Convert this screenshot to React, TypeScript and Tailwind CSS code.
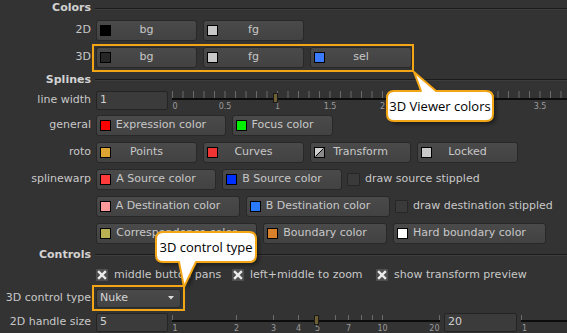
import React from "react";

type Kids = { children?: React.ReactNode };

const Label = ({ children }: Kids) => (
  <div className="w-[91px] shrink-0 text-right whitespace-nowrap">{children}</div>
);

const Header = ({ title, h }: { title: string; h: string }) => (
  <div className={`flex items-center ${h}`}>
    <div className="w-[91px] shrink-0 text-right font-bold text-[#d2d2d2]">{title}</div>
    <div className="ml-[4px] flex-1 h-[2px] border-t border-t-[#1c1c1c] border-b border-b-[#3d3d3d]" />
  </div>
);

const Row = ({ h, label, children }: { h: string; label: string } & Kids) => (
  <div className={`flex items-center ${h}`}>
    <Label>{label}</Label>
    <div className="ml-[5px] flex items-center gap-[6px]">{children}</div>
  </div>
);

const ColorBtn = ({ w, sw, text, swatch }: { w: string; sw?: string; text: string; swatch?: React.ReactNode }) => (
  <div
    className={`${w} h-[21px] shrink-0 flex items-center rounded-[3px] border border-[#282828] bg-gradient-to-b from-[#4a4a4a] to-[#424242] px-[3px]`}
  >
    {swatch ?? <span className={`w-[11px] h-[11px] border border-black shrink-0 ${sw}`} />}
    <span className="flex-1 text-center whitespace-nowrap">{text}</span>
    <span className="w-[11px] shrink-0" />
  </div>
);

const TransformSwatch = () => (
  <svg width="11" height="11" className="shrink-0">
    <rect x="0.5" y="0.5" width="10" height="10" fill="#d0d0d0" stroke="#000" />
    <path d="M10 1 L10 10 L1 10 Z" fill="#8a8a8a" />
    <path d="M1.5 9.5 L9.5 1.5" stroke="#000" strokeWidth="1" />
  </svg>
);

const Unchecked = () => (
  <span className="w-[13px] h-[13px] shrink-0 border border-[#262626] bg-[#3a3a3a] rounded-[1px]" />
);

const Checked = () => (
  <svg width="12" height="12" className="shrink-0">
    <rect x="0" y="0" width="12" height="12" rx="1" fill="#4f4f4f" />
    <path d="M3 3 L9 9 M9 3 L3 9" stroke="#ececec" strokeWidth="2.4" strokeLinecap="square" />
  </svg>
);

const Input = ({ w, value }: { w: string; value: string }) => (
  <div className={`${w} h-[19px] shrink-0 flex items-center rounded-[2px] border border-[#242424] bg-[#3b3b3b] pl-[3px] text-[#d0d0d0]`}>
    {value}
  </div>
);

const lineTicks = Array.from({ length: 38 }, (_, i) => i * 10.5);
// 2.5 and 3 sit under the tooltip
const lineLabels: [number, string][] = [[0, "0"], [1, "0.5"], [2, "1"], [3, "1.5"], [4, "2"], [7, "3.5"]];

const LineWidthSlider = () => (
  <svg width="395" height="23" className="ml-[4px] shrink-0" style={{ fontFamily: "'DejaVu Sans', sans-serif" }}>
    {lineTicks.map((x) => (
      <line key={x} x1={x + 0.5} y1="2" x2={x + 0.5} y2="9" stroke="#6a6a6a" />
    ))}
    <rect x="0" y="9" width="395" height="2" fill="#0c0c0c" />
    {lineLabels.map(([i, t]) => (
      <text key={t} x={i * 52.5 + 0.5} y="20" fontSize="8" fill="#9c9c9c" textAnchor={i === 0 ? "start" : "middle"}>
        {t}
      </text>
    ))}
    <rect x="101.5" y="4.5" width="4" height="9" fill="#6f6033" stroke="#1a1a1a" />
  </svg>
);

const handleTicks: [number, string][] = [
  [0, "1"], [64, "2"], [101, "3"], [126, "4"], [145, "5"], [163, ""], [176, "7"], [189, ""], [200, ""], [210, "10"], [267, "20"],
];

const HandleSlider = () => (
  <svg width="268" height="27" className="ml-[4px] shrink-0" style={{ fontFamily: "'DejaVu Sans', sans-serif" }}>
    {handleTicks.map(([x]) => (
      <line key={x} x1={x + 0.5} y1="6" x2={x + 0.5} y2="11" stroke="#6a6a6a" />
    ))}
    <rect x="0" y="11" width="268" height="2" fill="#0c0c0c" />
    {handleTicks
      .filter(([, t]) => t)
      .map(([x, t], i, arr) => (
        <text
          key={t}
          x={x + 0.5}
          y="22"
          fontSize="8"
          fill="#9c9c9c"
          textAnchor={i === 0 ? "start" : i === arr.length - 1 ? "end" : "middle"}
        >
          {t}
        </text>
      ))}
    <rect x="142.5" y="6.5" width="4" height="9" fill="#6f6033" stroke="#1a1a1a" />
  </svg>
);

const TailSlider = () => (
  <svg width="50" height="27" className="ml-[4px] shrink-0" style={{ fontFamily: "'DejaVu Sans', sans-serif" }}>
    <line x1="0.5" y1="6" x2="0.5" y2="11" stroke="#6a6a6a" />
    <rect x="0" y="11" width="50" height="2" fill="#0c0c0c" />
    <text x="1" y="22" fontSize="8" fill="#9c9c9c">1</text>
  </svg>
);

const Bubble = ({
  left, top, w, h, path, text, tx, ty,
}: { left: string; top: string; w: number; h: number; path: string; text: string; tx: number; ty: number }) => (
  <svg width={w} height={h} className={`absolute ${left} ${top}`} style={{ fontFamily: "'Open Sans', sans-serif" }}>
    <defs>
      <filter id={`blur${tx}`} x="-20%" y="-20%" width="140%" height="140%">
        <feGaussianBlur stdDeviation="2" />
      </filter>
    </defs>
    <path d={path} transform="translate(3 3)" fill="rgba(0,0,0,0.45)" filter={`url(#blur${tx})`} />
    <path d={path} fill="#ffffff" stroke="#f2a515" strokeWidth="2" strokeLinejoin="round" />
    <text x={tx} y={ty} fontSize="13" fill="#000" textAnchor="middle">
      {text}
    </text>
  </svg>
);

export default function App() {
  return (
    <div className="relative w-[567px] h-[333px] overflow-hidden bg-[#333333] text-[11px] text-[#c8c8c8] font-['DejaVu_Sans',sans-serif]">
      <Header title="Colors" h="h-[17px]" />
      <Row h="h-[27px]" label="2D">
        <ColorBtn w="w-[101px]" sw="bg-black" text="bg" />
        <ColorBtn w="w-[101px]" sw="bg-[#c8c8c8]" text="fg" />
      </Row>
      <Row h="h-[27px]" label="3D">
        <ColorBtn w="w-[101px]" sw="bg-[#262626]" text="bg" />
        <ColorBtn w="w-[101px]" sw="bg-[#c8c8c8]" text="fg" />
        <ColorBtn w="w-[102px]" sw="bg-[#3b7bff]" text="sel" />
      </Row>

      <Header title="Splines" h="h-[18px]" />
      <div className="flex items-center h-[23px]">
        <Label>line width</Label>
        <div className="ml-[5px] flex items-center">
          <Input w="w-[72px]" value="1" />
          <LineWidthSlider />
        </div>
      </div>
      <Row h="h-[27px]" label="general">
        <ColorBtn w="w-[130px]" sw="bg-[#ff0000]" text="Expression color" />
        <ColorBtn w="w-[101px]" sw="bg-[#00ee00]" text="Focus color" />
      </Row>
      <Row h="h-[27px]" label="roto">
        <ColorBtn w="w-[101px]" sw="bg-[#dfa532]" text="Points" />
        <ColorBtn w="w-[101px]" sw="bg-[#f03434]" text="Curves" />
        <ColorBtn w="w-[101px]" text="Transform" swatch={<TransformSwatch />} />
        <ColorBtn w="w-[101px]" sw="bg-[#cacaca]" text="Locked" />
      </Row>
      <Row h="h-[27px]" label="splinewarp">
        <ColorBtn w="w-[120px]" sw="bg-[#ff3a3a]" text="A Source color" />
        <ColorBtn w="w-[120px]" sw="bg-[#0030ff]" text="B Source color" />
        <div className="flex items-center gap-[5px] ml-[-1px]">
          <Unchecked />
          <span className="whitespace-nowrap">draw source stippled</span>
        </div>
      </Row>
      <Row h="h-[27px]" label="">
        <ColorBtn w="w-[144px]" sw="bg-[#ff9a9a]" text="A Destination color" />
        <ColorBtn w="w-[144px]" sw="bg-[#2a7aff]" text="B Destination color" />
        <div className="flex items-center gap-[5px] ml-[-1px]">
          <Unchecked />
          <span className="whitespace-nowrap">draw destination stippled</span>
        </div>
      </Row>
      <Row h="h-[27px]" label="">
        <ColorBtn w="w-[161px]" sw="bg-[#b8b052]" text="Correspondence color" />
        <ColorBtn w="w-[124px]" sw="bg-[#d8802a]" text="Boundary color" />
        <ColorBtn w="w-[153px]" sw="bg-white" text="Hard boundary color" />
      </Row>

      <Header title="Controls" h="h-[16px]" />
      <div className="flex items-center h-[24px]">
        <Label>{""}</Label>
        <div className="ml-[5px] flex items-center">
          <div className="w-[136px] flex items-center gap-[6px]">
            <Checked />
            <span className="whitespace-nowrap">middle button pans</span>
          </div>
          <div className="w-[144px] flex items-center gap-[6px]">
            <Checked />
            <span className="whitespace-nowrap">left+middle to zoom</span>
          </div>
          <div className="flex items-center gap-[6px]">
            <Checked />
            <span className="whitespace-nowrap">show transform preview</span>
          </div>
        </div>
      </div>
      <div className="flex items-center h-[22px]">
        <Label>3D control type</Label>
        <div className="ml-[5px] w-[85px] h-[19px] flex items-center justify-between rounded-[3px] border border-[#282828] bg-gradient-to-b from-[#4a4a4a] to-[#424242] pl-[3px] pr-[6px] text-[#d6d6d6]">
          <span>Nuke</span>
          <svg width="6" height="4">
            <path d="M0 0 L6 0 L3 3.5 Z" fill="#dcdcdc" />
          </svg>
        </div>
      </div>
      <div className="flex items-center h-[27px]">
        <Label>2D handle size</Label>
        <div className="ml-[5px] flex items-center">
          <Input w="w-[72px]" value="5" />
          <HandleSlider />
          <div className="ml-[4px]">
            <Input w="w-[73px]" value="20" />
          </div>
          <TailSlider />
        </div>
      </div>

      {/* annotation frames */}
      <div className="absolute left-[92px] top-[44px] w-[322px] h-[28px] border-2 border-[#f2a515]" />
      <div className="absolute left-[92px] top-[285px] w-[93px] h-[26px] border-2 border-[#f2a515]" />

      <Bubble
        left="left-[380px]"
        top="top-[66px]"
        w={125}
        h={66}
        path="M14 25 L41 25 L34 6 L56 25 L106 25 Q113 25 113 32 L113 48 Q113 55 106 55 L14 55 Q7 55 7 48 L7 32 Q7 25 14 25 Z"
        text="3D Viewer colors"
        tx={60}
        ty={45}
      />
      <Bubble
        left="left-[150px]"
        top="top-[226px]"
        w={115}
        h={66}
        path="M13 6 L99 6 Q106 6 106 13 L106 29 Q106 36 99 36 L46 36 L34 61 L29 36 L13 36 Q6 36 6 29 L6 13 Q6 6 13 6 Z"
        text="3D control type"
        tx={56}
        ty={26}
      />
    </div>
  );
}
